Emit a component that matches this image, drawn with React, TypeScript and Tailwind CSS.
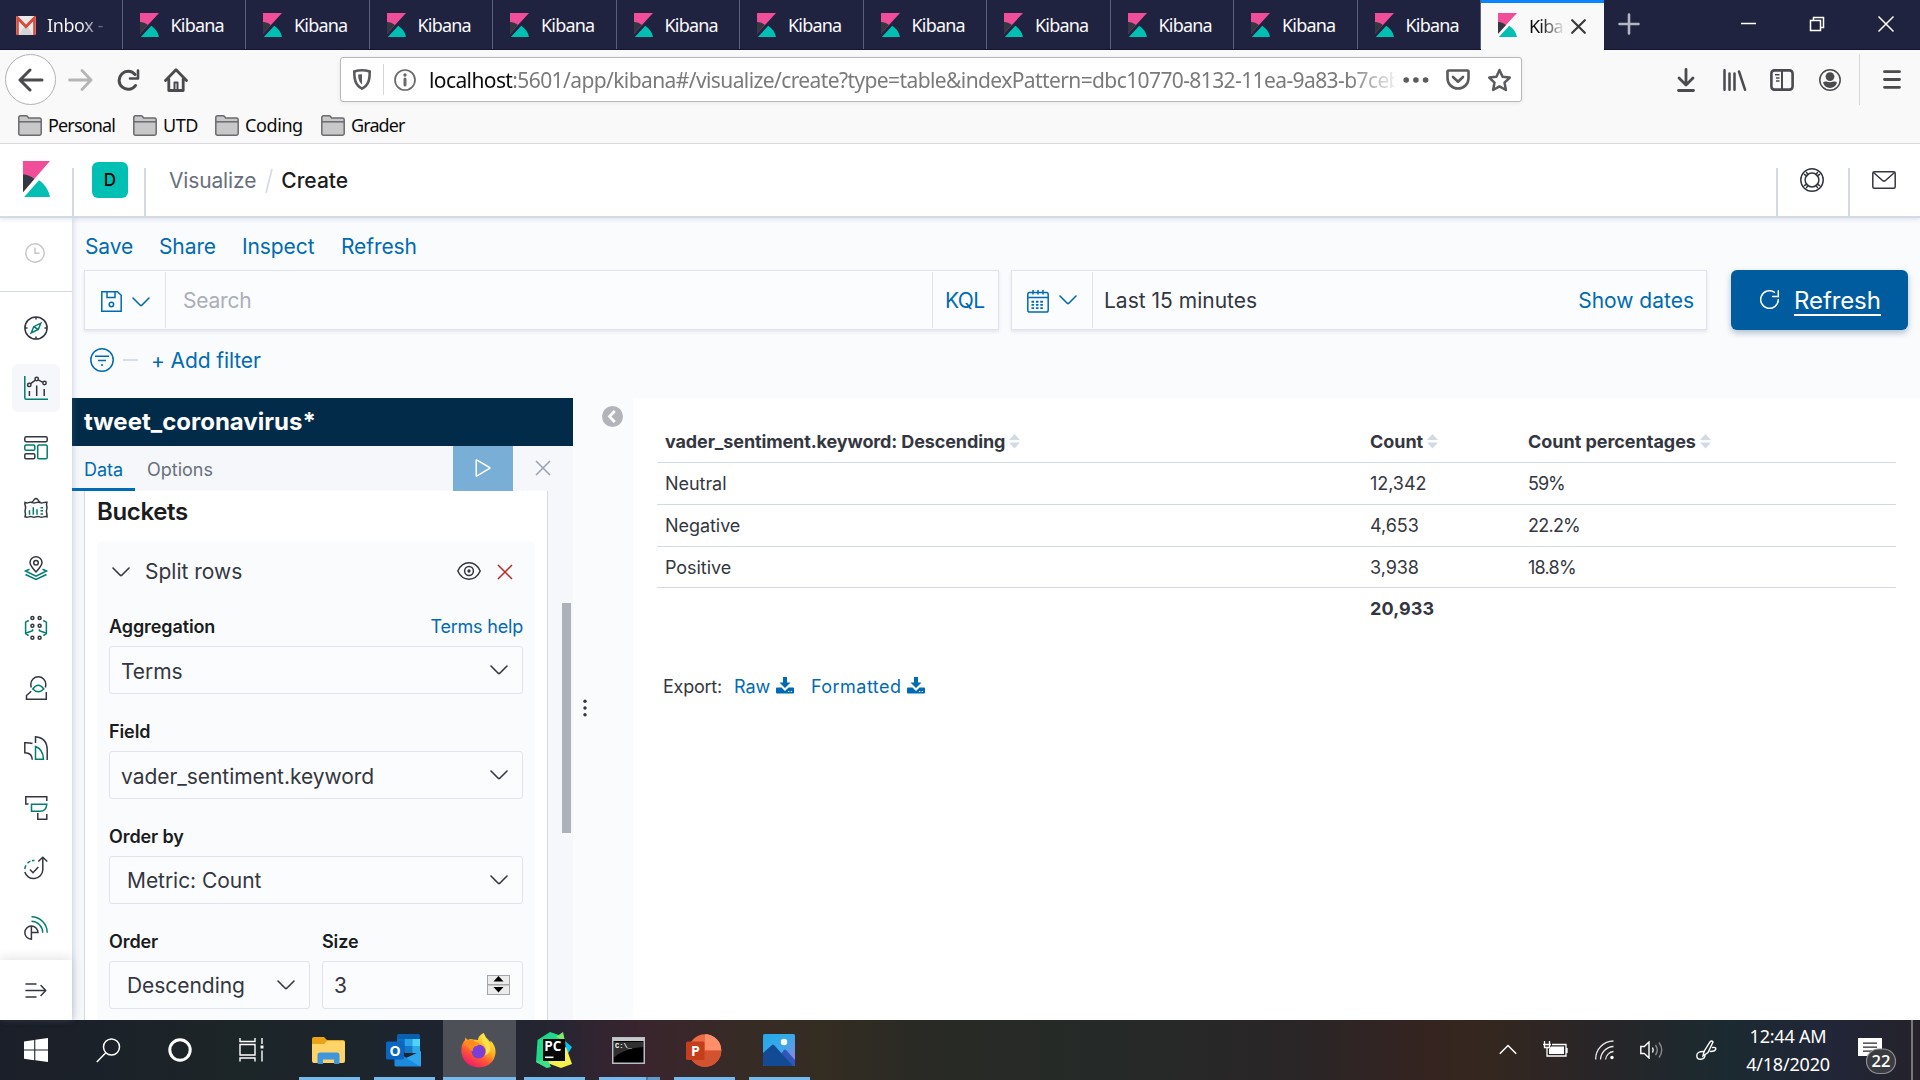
import React from "react";

type Kids = { children: React.ReactNode };

const DARK = "#343741";
const TEAL = "#017d73";
const BLUE = "#006bb4";

function KibanaLogo({ w, h, ink = DARK }: { w: number; h: number; ink?: string }) {
  return (
    <svg width={w} height={h} viewBox="0 0 27 36" preserveAspectRatio="none" className="shrink-0">
      <path d="M0 0v31L27 0z" fill="#f04e98" />
      <path d="M0 13.5v17.8L11.3 18C7.900 15.200 4 13.500 0 13.500z" fill={ink} />
      <path d="M16 19.200L1.200 36H27c-1.300-7-5.300-13-11-16.800z" fill="#00bfb3" />
    </svg>
  );
}

function Chevron({ color = DARK, className = "" }: { color?: string; className?: string }) {
  return (
    <svg width="18" height="10" viewBox="0 0 18 10" className={`shrink-0 ${className}`} fill="none" stroke={color} strokeWidth="1.6" strokeLinecap="round" strokeLinejoin="round">
      <path d="M1 1l7.200 7.200q.8.7 1.600 0L17 1" />
    </svg>
  );
}

function BrowserTab() {
  return (
    <div className="flex h-[49px] w-[123.5px] shrink-0 items-center border-r border-[#5d5e77] pl-[17px]">
      <KibanaLogo w={19} h={24} />
      <span className="ml-[12px] pt-[2px] text-[18px] tracking-[-0.8px] text-[#f9f9fa]">Kibana</span>
    </div>
  );
}

function TabStrip() {
  return (
    <div className="flex h-[50px] shrink-0 border-b border-[#14152c] bg-[#202340]">
      <div className="flex h-[49px] w-[122.500px] shrink-0 items-center border-r border-[#5d5e77] pt-[2px] pl-[16px]">
        <svg width="20" height="19" viewBox="0 0 20 16" preserveAspectRatio="none" className="shrink-0">
          <rect width="20" height="16" rx="1.500" fill="#e9e9e9" />
          <path d="M3 16L8 9h4l5 7z" fill="#d5d5d5" />
          <path d="M1.500 16V1.500L10 9l8.500-7.500V16" fill="none" stroke="#d54b3d" strokeWidth="2.600" />
        </svg>
        <span className="ml-[11px] bg-gradient-to-r from-[#f9f9fa] from-60% to-[#55576f] bg-clip-text text-[18px] tracking-[-0.4px] whitespace-pre text-transparent">Inbox -</span>
      </div>
      {Array.from({ length: 11 }, (_, i) => (
        <BrowserTab key={i} />
      ))}
      <div className="flex h-[50px] w-[123px] shrink-0 items-center border-t-[3px] border-[#0a84ff] bg-[#f9f9fa] pb-[3px] pl-[17px]">
        <KibanaLogo w={19} h={24} />
        <span className="ml-[12px] w-[34px] overflow-hidden bg-gradient-to-r from-[#0c0c0d] from-30% to-[#e4e4e4] bg-clip-text pt-[2px] text-[18px] tracking-[-0.8px] text-transparent">Kiba</span>
        <svg width="15" height="15" viewBox="0 0 15 15" className="mt-[3px] ml-[8px]" stroke="#3a3a3c" strokeWidth="2.200" strokeLinecap="round">
          <path d="M1.200 1.200l12.600 12.600M13.800 1.200L1.200 13.800" />
        </svg>
      </div>
      <svg width="22" height="22" viewBox="0 0 22 22" className="mt-[13px] ml-[14px]" stroke="#b4b5c2" strokeWidth="2.600" strokeLinecap="round">
        <path d="M11 1.500v19M1.500 11h19" />
      </svg>
      <svg width="154" height="18" viewBox="0 0 154 18" className="mt-[15px] ml-[101px]" stroke="#fff" strokeWidth="1.500" fill="none">
        <path d="M0 8.500h15" />
        <path d="M69.500 5.500h10v10h-10zM72.500 5V2.500h10v10h-2.500" />
        <path d="M137.500 1.500l15 15M152.500 1.500l-15 15" />
      </svg>
    </div>
  );
}

function Toolbar() {
  return (
    <div className="flex h-[59px] items-center">
      <div className="ml-[5px] flex size-[51px] items-center justify-center rounded-full border border-[#b1b1b3] bg-white">
        <svg width="26" height="24" viewBox="0 0 26 24" fill="none" stroke="#4a4a4f" strokeWidth="3" strokeLinecap="round" strokeLinejoin="round">
          <path d="M24 12H2.500M12 2L2 12l10 10" />
        </svg>
      </div>
      <svg width="25" height="22" viewBox="0 0 25 22" className="ml-[12px]" fill="none" stroke="#b5b5b6" strokeWidth="2.800" strokeLinecap="round" strokeLinejoin="round">
        <path d="M1.500 11h21M14 1.500l9 9.500-9 9.500" />
      </svg>
      <svg width="24" height="22" viewBox="0 0 24 22" className="ml-[23px]" fill="none" stroke="#4a4a4f" strokeWidth="3" strokeLinecap="round">
        <path d="M19 5.500A9 9 0 1 0 19.500 16.500" />
        <path d="M22 1.500v8h-8" strokeWidth="2.600" strokeLinejoin="round" />
      </svg>
      <svg width="24" height="24" viewBox="0 0 24 24" className="ml-[24px]" fill="none" stroke="#4a4a4f" strokeWidth="2.800" strokeLinecap="round" strokeLinejoin="round">
        <path d="M1.500 12.500L12 1.800l10.500 10.700M4.800 11v11.500h14.400V11" />
        <path d="M10.500 22v-7.500h3V22z" strokeWidth="2" />
      </svg>
      <div className="ml-[152px] flex h-[45px] w-[1182px] items-center rounded-[3px] border border-[#b8b8ba] bg-white shadow-[0_1px_4px_rgba(0,0,0,0.08)]">
        <svg width="18" height="21" viewBox="0 0 18 21" className="ml-[12px] shrink-0">
          <path d="M9 1.300c3 0 5.500.5 7.700 1.200 0 7.500-.7 13.500-7.700 17.200C2 16 1.300 10 1.300 2.500 3.500 1.800 6 1.300 9 1.300z" fill="none" stroke="#5b5b5f" strokeWidth="2.600" />
          <path d="M9 5.200v10.300C5.800 13 5.200 9.500 5.200 5.600z" fill="#5b5b5f" />
        </svg>
        <div className="ml-[12px] h-[31px] w-px bg-[#d7d7db]" />
        <svg width="22" height="22" viewBox="0 0 22 22" className="ml-[10px] shrink-0" fill="none" stroke="#6a6a6d">
          <circle cx="11" cy="11" r="10" strokeWidth="1.700" />
          <path d="M11 10v6" strokeWidth="3" strokeLinecap="round" />
          <circle cx="11" cy="6" r="1.700" fill="#6a6a6d" stroke="none" />
        </svg>
        <div className="ml-[13px] w-[965px] shrink-0 overflow-hidden pt-[2px] text-[21px] tracking-[-0.6px] whitespace-nowrap text-[#7a7a7c] [mask-image:linear-gradient(to_right,#000_920px,rgba(0,0,0,0.15)_965px)]">
          <span className="text-[#0c0c0d]">localhost</span>:5601/app/kibana#/visualize/create?type=table&amp;indexPattern=dbc10770-8132-11ea-9a83-b7ceb
        </div>
        <svg width="26" height="6" viewBox="0 0 26 6" className="ml-[9px] shrink-0" fill="#5b5b5f">
          <circle cx="3.200" cy="3" r="2.800" />
          <circle cx="12.900" cy="3" r="2.800" />
          <circle cx="22.600" cy="3" r="2.800" />
        </svg>
        <svg width="24" height="21" viewBox="0 0 24 21" className="ml-[17px] shrink-0" fill="none" stroke="#5b5b5f" strokeWidth="2.600" strokeLinecap="round" strokeLinejoin="round">
          <path d="M2.500 1.500h19q1 0 1 1V9c0 6-4.500 10.500-10.500 10.500S1.500 15 1.500 9V2.500q0-1 1-1z" />
          <path d="M7 8l5 4.700L17 8" />
        </svg>
        <svg width="25" height="24" viewBox="0 0 25 24" className="ml-[17px] shrink-0" fill="none" stroke="#5b5b5f" strokeWidth="2.500" strokeLinejoin="round">
          <path d="M12.500 2l3.100 6.700 7.200.9-5.300 5 1.400 7.400-6.400-3.600L6.100 22l1.400-7.400-5.300-5 7.200-.9z" />
        </svg>
      </div>
      <svg width="18" height="24" viewBox="0 0 18 24" className="ml-[155px]" fill="none" stroke="#4a4a4f" strokeWidth="2.800" strokeLinecap="round" strokeLinejoin="round">
        <path d="M9 1.500v15M2 10l7 7 7-7M1.500 22.500h15" />
      </svg>
      <svg width="24" height="22" viewBox="0 0 24 22" className="ml-[28px]" fill="none" stroke="#4a4a4f" strokeWidth="2.500" strokeLinecap="round">
        <path d="M1.500 1.300v19.400M6.500 4.500v16.200M11.500 4.500v16.200M16 2.500l6 18.200" />
      </svg>
      <svg width="24" height="22" viewBox="0 0 24 22" className="ml-[23px]" fill="none" stroke="#4a4a4f" strokeWidth="2.600">
        <rect x="1.400" y="1.400" width="21.200" height="19.200" rx="3" />
        <path d="M12 1v20" strokeWidth="2" />
        <path d="M5 5.800h4.500M6 9h3.500M6 12h3.500" strokeWidth="1.500" />
      </svg>
      <svg width="22" height="22" viewBox="0 0 22 22" className="ml-[25px]">
        <circle cx="11" cy="11" r="10.200" fill="none" stroke="#4a4a4f" strokeWidth="1.500" />
        <circle cx="11" cy="7.600" r="4.400" fill="#4a4a4f" />
        <path d="M4 13.500q1.500-1.500 3.500-1 3.500 1.600 7 0 2-.5 3.500 1-1.500 5-7 5.500-5.500-.5-7-5.500z" fill="#4a4a4f" />
      </svg>
      <div className="ml-[18px] h-[51px] w-px bg-[#d7d7db]" />
      <svg width="18" height="19" viewBox="0 0 18 19" className="ml-[23px]" stroke="#4a4a4f" strokeWidth="2.800" strokeLinecap="round">
        <path d="M1.500 1.700h15M1.500 9.500h15M1.500 17.300h15" />
      </svg>
    </div>
  );
}

function Bookmark({ label, className }: { label: string; className: string }) {
  return (
    <div className={`flex items-center text-[18px] ${className}`}>
      <svg width="24" height="21" viewBox="0 0 24 21" className="shrink-0" fill="#c8c8ca" stroke="#6b6b6e" strokeWidth="1.500" strokeLinejoin="round">
        <path d="M.8 18.500v-16q0-1.700 1.700-1.700h5.500q1 0 1.700.9l1 1.300h10.800q1.700 0 1.700 1.700v13.800q0 1.700-1.700 1.700h-19Q.8 20.200.8 18.500z" />
        <path d="M.8 6.800h22.400" />
      </svg>
      <span className="ml-[6px] text-[#0c0c0d]">{label}</span>
    </div>
  );
}

function Bookmarks() {
  return (
    <div className="flex h-[33px] items-center pl-[18px]">
      <Bookmark label="Personal" className="w-[115px] tracking-[-0.85px]" />
      <Bookmark label="UTD" className="w-[82px] tracking-[-0.4px]" />
      <Bookmark label="Coding" className="w-[106px] tracking-[-0.4px]" />
      <Bookmark label="Grader" className="w-[106px] tracking-[-0.9px]" />
    </div>
  );
}

function AppHeader() {
  return (
    <div className="relative z-10 flex h-[74px] shrink-0 border-b-2 border-[#d3dae6] bg-white shadow-[0_2px_4px_rgba(90,110,150,0.15)]">
      <div className="flex w-[72px] pt-[17px] pl-[23px]">
        <KibanaLogo w={27} h={36} />
      </div>
      <div className="mt-[24px] h-[48px] w-[2px] bg-[#d3dae6]" />
      <div className="mt-[18px] ml-[18px] flex size-[36px] items-center justify-center rounded-[6px] bg-[#00bfb3] pt-[2px] text-[17px] font-medium text-black">D</div>
      <div className="mt-[24px] ml-[16px] h-[48px] w-[2px] bg-[#d3dae6]" />
      <div className="flex h-[72px] flex-1 items-center pt-[2px] pl-[23px] text-[21px]">
        <span className="tracking-[-0.15px] text-[#69707d]">Visualize</span>
        <svg width="8" height="24" viewBox="0 0 8 24" className="mb-[1px] ml-[9px]" stroke="#d3dae6" strokeWidth="1.700">
          <path d="M7 0L1 24" />
        </svg>
        <span className="ml-[8px] font-medium text-[#1a1c21]">Create</span>
      </div>
      <div className="mt-[24px] h-[48px] w-[2px] bg-[#d3dae6]" />
      <svg width="24" height="24" viewBox="0 0 24 24" className="mt-[24px] ml-[22px]" fill="none" stroke={DARK} strokeWidth="1.500">
        <circle cx="12" cy="12" r="11.200" />
        <circle cx="12" cy="12" r="6.900" />
        <path d="M4 6.200l3.200 2.200M6.200 4l2.200 3.200M17.800 4l-2.200 3.200M20 6.200l-3.200 2.200M20 17.800l-3.200-2.200M17.800 20l-2.200-3.200M6.200 20l2.200-3.200M4 17.800l3.200-2.200" strokeWidth="1.400" />
      </svg>
      <div className="mt-[24px] ml-[24px] h-[48px] w-[2px] bg-[#d3dae6]" />
      <svg width="24" height="18" viewBox="0 0 24 18" className="mt-[27px] mr-[24px] ml-[22px]" fill="none" stroke={DARK} strokeWidth="1.500">
        <rect x=".8" y=".8" width="22.400" height="16.400" rx="1.500" />
        <path d="M1.500 1.500l9.300 8.200q1.200 1 2.400 0l9.300-8.200" />
      </svg>
    </div>
  );
}

const navIcons: React.ReactNode[] = [
  <>
    <circle cx="12" cy="12" r="11.100" />
    <path d="M12 1v2.500M12 20.500V23M1 12h2.500M20.500 12H23" />
    <path d="M16.800 7.200l-2.500 6.300-7.100 3.500 2.500-6.300zM14.300 13.500l-4.600-2.800" stroke={TEAL} />
  </>,
  <>
    <path d="M.8 0v21.700q0 1.500 1.500 1.500H24" stroke={TEAL} />
    <path d="M5.400 15v5M12.700 9.500V20M20.200 13v7M6.600 7.600l4.800-3.500M14.200 3.900l4.600 2.400" />
    <circle cx="5.300" cy="8.900" r="1.700" />
    <circle cx="12.700" cy="3" r="1.700" />
    <circle cx="20.500" cy="7" r="1.700" />
  </>,
  <>
    <rect x=".8" y=".8" width="22.400" height="5" rx="1.500" />
    <rect x=".8" y="9" width="10" height="5.200" rx="1.300" stroke={TEAL} />
    <rect x=".8" y="17.800" width="10" height="5" rx="1.300" />
    <rect x="13.700" y="9" width="9.500" height="13.800" rx="1.300" stroke={TEAL} />
  </>,
  <g transform="translate(0 .8)">
    <path d="M1 5.500q1.800 1 3.600.3 1.800-.7 3.600 0 1.900.6 3.800 0 1.900-.6 3.800 0 1.800.7 3.600 0 1.800-.7 3.600-.3-.8 1.800-.3 3.500.5 1.900 0 3.600-.5 1.900 0 3.600.4 1.800.3 3.800-1.800-.8-3.600.1-1.800.6-3.600 0-1.900-.7-3.800 0-1.900.7-3.800 0-1.800-.6-3.600 0-1.800.5-3.600-.1.700-2 .3-3.800-.5-1.700 0-3.600.5-1.700 0-3.600Q.6 7.300 1 5.500zM7.500 5.500q1.800-1 2.800-2.800Q12 .5 13.700 2.700q1 1.800 2.800 2.800" />
    <path d="M5.500 13.500V18M9.300 10.500V18M13 12.500V18M16.500 11h2.500M16.500 14h2.500M16.500 17.200h2.500" stroke={TEAL} />
  </g>,
  <>
    <path d="M12 16C8.800 12.500 6 9.800 6 6.600 6 3.400 8.600.8 12 .8s6 2.600 6 5.800c0 3.200-2.800 5.900-6 9.400z" />
    <circle cx="12" cy="6.700" r="2.300" />
    <path d="M5.500 13.200L1.500 15 12 20.200 22.500 15l-4-1.800M1.500 18.500L12 23.500l10.500-5" stroke={TEAL} />
  </>,
  <>
    <circle cx="8.400" cy="2.100" r="1.500" /><circle cx="15.600" cy="2.100" r="1.500" />
    <circle cx="8.400" cy="9.800" r="1.500" /><circle cx="15.600" cy="9.800" r="1.500" />
    <circle cx="8.400" cy="21.800" r="1.500" /><circle cx="15.600" cy="21.800" r="1.500" />
    <path d="M4.800 4.500L1.600 6.200v11.300l3 2.200M1.600 17.300l7-2.500v-1.500M19.200 4.500l3.200 1.700v11.300l-3 2.200M22.400 17.300l-7-2.500v-1.500" stroke={TEAL} />
  </>,
  <>
    <path d="M7.300 11.500Q6.800 10 6.800 8.300a7.500 7.500 0 0 1 15 0q0 1.700-.5 3.200M7.200 15.200l-4.700 4.300v3.700h19.800V16" />
    <path d="M8.800 13q5.500-7.500 11 0-5.500 5.500-11 0z" stroke={TEAL} />
  </>,
  <>
    <path d="M11.500 7V.8Q23.200 2 23.200 14v10" />
    <path d="M8.500 7.500Q5 6.600.8 6.800v10q7.500.2 7.500 7" />
    <path d="M11.500 10.500q7.500 2.500 8 12.700h-8z" stroke={TEAL} />
  </>,
  <>
    <path d="M4.500 8H1.800V.8h21V5M13.800 17v6.200h9V18" />
    <path d="M7.500 8.200h15.300q-.5 7-6.800 7H7.500z" stroke={TEAL} />
  </>,
  <>
    <path d="M18.800 1.500V14a9.200 9.200 0 0 1-18 2M14.300 5.500l4.500-4.300 4.500 4.300M6 13.500l3 3.200 5.300-5.700" />
    <path d="M.8 13q.2-2 1.200-3.600M3.500 7.300q1.300-1.500 3-2.200M8 4.700q1-.2 2.500-.1" stroke={TEAL} />
  </>,
  <>
    <path d="M7.400 23.200A6.600 6.600 0 1 1 14 16.600H7.400M7.400 10v13.900" />
    <path d="M7.500 5.300A11.300 11.300 0 0 1 18.700 16.700M7.500.8A15.800 15.800 0 0 1 23.200 16.700" stroke={TEAL} />
  </>,
];

function SideNav() {
  return (
    <nav className="relative z-[5] flex w-[72px] shrink-0 flex-col bg-white shadow-[1px_0_6px_rgba(90,110,150,0.28)]">
      <div className="flex h-[74px] justify-center border-b border-[#d3dae6] pt-[25px]">
        <svg width="20" height="20" viewBox="0 0 20 20" className="mr-[2px]" fill="none" stroke="#c5c7cb" strokeWidth="1.500">
          <circle cx="10" cy="10" r="9.200" />
          <path d="M10 4.500v5.700h4.500" />
        </svg>
      </div>
      <div className="mt-[12px] flex flex-1 flex-col items-center gap-[12px]">
        {navIcons.map((icon, i) => (
          <div key={i} className={i === 1 ? "flex size-[48px] items-center justify-center rounded-[6px] bg-[#f5f7fa]" : "flex size-[48px] items-center justify-center"}>
            <svg width="24" height="24" viewBox="0 0 24 24" fill="none" stroke={DARK} strokeWidth="1.500" overflow="visible">
              {icon}
            </svg>
          </div>
        ))}
      </div>
      <div className="flex h-[60px] items-center justify-center bg-white shadow-[0_-2px_10px_rgba(90,90,90,0.16)]">
        <svg width="22" height="15" viewBox="0 0 22 15" fill="none" stroke={DARK} strokeWidth="1.500" strokeLinecap="round" strokeLinejoin="round">
          <path d="M1 1h10M1 7.500h19.500M1 14h10M16 2.500l4.800 5-4.800 5" />
        </svg>
      </div>
    </nav>
  );
}

function MenuLink({ children, w }: Kids & { w: string }) {
  return <span className={`${w} shrink-0`}>{children}</span>;
}

function QueryBar() {
  return (
    <div className="flex h-[60px] pr-[12px] pl-[12px]">
      <div className="flex w-[915px] items-center border border-[#e0e3ed] bg-[#fbfcfd] shadow-[0_2px_3px_rgba(90,110,150,0.15)]">
        <svg width="21" height="21" viewBox="0 0 21 21" className="mt-[3px] ml-[16px] shrink-0" fill="none" stroke={BLUE} strokeWidth="1.500">
          <path d="M.8.8h15.700l3.700 3.500v15.900H.8zM6 1v5.500h8V1" />
          <circle cx="10.400" cy="13.500" r="2.200" />
        </svg>
        <Chevron color={BLUE} className="mt-[3px] ml-[10px]" />
        <div className="ml-[15px] h-[56px] w-px bg-[#dfe3ea]" />
        <span className="ml-[17px] flex-1 pt-[2px] tracking-[-0.2px] text-[#abafb8]">Search</span>
        <div className="h-[56px] w-px bg-[#dfe3ea]" />
        <span className="w-[65px] pt-[2px] pl-[12px] tracking-[-0.6px] text-[#006bb4]">KQL</span>
      </div>
      <div className="ml-[12px] flex w-[696px] items-center border border-[#e0e3ed] bg-[#fbfcfd] shadow-[0_2px_3px_rgba(90,110,150,0.15)]">
        <svg width="22" height="23" viewBox="0 0 22 23" className="mt-[2px] ml-[15px] shrink-0" fill="none" stroke={BLUE} strokeWidth="1.500">
          <rect x=".8" y="2.500" width="20.400" height="19.500" rx="1.800" />
          <path d="M1 7.500h20M6 0v4.500M11 0v4.500M16 0v4.500" />
          <path d="M4.500 11.700h13M4.500 14.900h13M4.500 18.100h13" strokeWidth="1.900" strokeDasharray="2.600 1.800" />
        </svg>
        <Chevron color={BLUE} className="ml-[10px]" />
        <div className="ml-[15px] h-[56px] w-px bg-[#dfe3ea]" />
        <span className="ml-[11px] flex-1 pt-[2px] text-[#343741]">Last 15 minutes</span>
        <span className="mr-[12px] pt-[2px] text-[#006bb4]">Show dates</span>
      </div>
      <div className="ml-[24px] flex flex-1 items-center rounded-[6px] bg-[#005c9e] text-[24px] text-white shadow-[0_3px_6px_rgba(40,80,120,0.35)]">
        <svg width="20" height="20" viewBox="0 0 20 20" className="ml-[29px] shrink-0" fill="none" stroke="#fff" strokeWidth="1.500" strokeLinecap="round">
          <path d="M14.500 2.300A8.800 8.800 0 1 0 18.300 9.500M18.300.8v5.700h-5.700" />
        </svg>
        <span className="mt-[1px] ml-[14px] border-b-2 border-white pt-[1px] leading-[27px] tracking-[-0.1px]">Refresh</span>
      </div>
    </div>
  );
}

function Select({ label, value, help, indent = false, className = "" }: { label: string; value: string; help?: string; indent?: boolean; className?: string }) {
  return (
    <div className={className}>
      <div className="flex h-[40px] items-center justify-between text-[18px]">
        <span className="font-semibold tracking-[-0.1px] text-[#1a1c21]">{label}</span>
        {help && <span className="tracking-[-0.2px] text-[#006bb4]">{help}</span>}
      </div>
      <div className={`flex h-[48px] items-center justify-between rounded-[3px] border border-[#e0e3ed] bg-[#fbfcfd] pr-[14px] text-[21px] text-[#343741] ${indent ? "pt-[2px] pl-[17px]" : "pt-[3px] pl-[11px]"}`}>
        <span className="tracking-[-0.05px]">{value}</span>
        <Chevron className="mb-[3px]" />
      </div>
    </div>
  );
}

function EditorPanel() {
  return (
    <div className="flex w-[501px] shrink-0 flex-col bg-[#f5f7fa]">
      <div className="flex h-[48px] shrink-0 items-center bg-[#012b49] pl-[12px] text-[24px] font-bold text-white">tweet_coronavirus*</div>
      <div className="flex h-[45px] shrink-0 text-[18px]">
        <div className="flex w-[63px] items-center border-b-[3px] border-[#006bb4] pt-[5px] pl-[12px] text-[#006bb4]">Data</div>
        <div className="flex flex-1 items-center pt-[2px] pl-[12px] text-[#69707d]">Options</div>
        <div className="flex w-[60px] items-center justify-center bg-[#79aed7]">
          <svg width="16" height="18" viewBox="0 0 16 18" className="mb-[2px]" fill="none" stroke="#fff" strokeWidth="1.500" strokeLinejoin="round">
            <path d="M1.200 1.500q0-.8.800-.4l12.600 7.400q.6.500 0 .9L2 16.900q-.8.400-.8-.4z" />
          </svg>
        </div>
        <div className="flex w-[60px] items-center justify-center">
          <svg width="16" height="16" viewBox="0 0 16 16" className="mb-[1px]" stroke="#98a2b3" strokeWidth="1.500">
            <path d="M1 1l14 14M15 1L1 15" />
          </svg>
        </div>
      </div>
      <div className="flex min-h-0 flex-1">
        <div className="ml-[12px] h-[560px] w-[464px] border-x border-[#d3dae6] bg-white px-[12px]">
          <div className="h-[50px] text-[24px] leading-[41px] font-semibold tracking-[-0.35px] text-[#1a1c21]">Buckets</div>
          <div className="h-[510px] rounded-[6px] bg-[#fafbfd] px-[12px]">
            <div className="flex h-[65px] items-center pb-[3px] text-[21px] text-[#343741]">
              <Chevron className="ml-[3px]" />
              <span className="ml-[15px] flex-1">Split rows</span>
              <svg width="24" height="18" viewBox="0 0 24 18" className="mb-[2px]" fill="none" stroke={DARK} strokeWidth="1.500">
                <path d="M.8 9Q4.500.8 12 .8T23.200 9Q19.500 17.200 12 17.200T.8 9z" />
                <circle cx="12" cy="9" r="4.400" />
                <circle cx="12" cy="9" r=".9" fill={DARK} />
              </svg>
              <svg width="16" height="16" viewBox="0 0 16 16" className="mr-[10px] mb-[1px] ml-[16px]" stroke="#bd271e" strokeWidth="1.500">
                <path d="M1 1l14 14M15 1L1 15" />
              </svg>
            </div>
            <Select label="Aggregation" value="Terms" help="Terms help" />
            <Select label="Field" value="vader_sentiment.keyword" className="mt-[17px]" />
            <Select label="Order by" value="Metric: Count" indent className="mt-[17px]" />
            <div className="mt-[17px] flex gap-[12px]">
              <Select label="Order" value="Descending" indent className="flex-1" />
              <div className="flex-1">
                <div className="flex h-[40px] items-center text-[18px] font-semibold tracking-[-0.1px] text-[#1a1c21]">Size</div>
                <div className="flex h-[48px] items-center justify-between rounded-[3px] border border-[#e0e3ed] bg-[#fbfcfd] pt-[2px] pr-[12px] pl-[11px] text-[21px] text-[#343741]">
                  <span>3</span>
                  <svg width="23" height="20" viewBox="0 0 23 20" className="mb-[2px]">
                    <rect x=".5" y=".5" width="22" height="9" fill="#ececec" stroke="#a5a5a5" />
                    <rect x=".5" y="10" width="22" height="9.500" fill="#ececec" stroke="#a5a5a5" />
                    <path d="M6.500 6.500L11.500 1l5 5.500zM6.500 12h10l-5 5.500z" fill="#000" />
                  </svg>
                </div>
              </div>
            </div>
          </div>
        </div>
        <div className="mt-[112px] ml-[14px] h-[230px] w-[9px] bg-[#adb2ba]" />
      </div>
    </div>
  );
}

function SortMark() {
  return (
    <svg width="11" height="15" viewBox="0 0 11 15" className="ml-[4px] shrink-0" fill="#d3dae6">
      <path d="M0 6L5.500 0 11 6zM0 8.500h11l-5.500 6z" />
    </svg>
  );
}

function DownloadMark() {
  return (
    <svg width="18" height="17" viewBox="0 0 18 17" className="mb-[2px] ml-[6px] shrink-0" fill={BLUE}>
      <path d="M7 0h4v5.500h3.500L9 11 3.500 5.500H7z" />
      <path d="M1 10.500h4.500L9 14l3.500-3.500H17q1 0 1 1V15.500q0 1-1 1H1q-1 0-1-1V11.500q0-1 1-1z" />
      <path d="M12 14h1.300v1H12zM14.700 14H16v1h-1.300z" fill="#fff" />
    </svg>
  );
}

function HeadCell({ children, w }: Kids & { w: string }) {
  return (
    <div className={`flex items-center font-bold ${w}`}>
      {children}
      <SortMark />
    </div>
  );
}

const rows: [string, string, string][] = [
  ["Neutral", "12,342", "59%"],
  ["Negative", "4,653", "22.2%"],
  ["Positive", "3,938", "18.8%"],
];

function ResultTable() {
  return (
    <div className="min-w-0 flex-1 bg-white pr-[24px] pl-[24px] text-[18px] text-[#343741]">
      <div className="flex h-[65px] items-center border-b border-[#d3dae6] pt-[22px] pl-[8px]">
        <HeadCell w="w-[705px] tracking-[-0.12px]">vader_sentiment.keyword: Descending</HeadCell>
        <HeadCell w="w-[158px] tracking-[-0.05px]">Count</HeadCell>
        <HeadCell w="tracking-[-0.03px]">Count percentages</HeadCell>
      </div>
      {rows.map(([name, count, pct], i) => (
        <div key={name} className={`flex items-center border-b border-[#d3dae6] pl-[8px] tracking-[-0.05px] ${i === 2 ? "h-[41px]" : "h-[42px]"}`}>
          <span className="w-[705px]">{name}</span>
          <span className="w-[158px]">{count}</span>
          <span className={i === 2 ? "tracking-[-0.75px]" : i === 1 ? "tracking-[-0.75px]" : "tracking-[-1px]"}>{pct}</span>
        </div>
      ))}
      <div className="flex h-[41px] items-center pl-[713px] font-bold tracking-[0.1px]">20,933</div>
      <div className="mt-[43px] flex h-[28px] items-center pl-[6px] tracking-[-0.1px]">
        <span className="w-[71px] tracking-[-0.25px]">Export:</span>
        <span className="flex w-[77px] items-center text-[#006bb4]">Raw<DownloadMark /></span>
        <span className="flex items-center tracking-[0.45px] text-[#006bb4]">Formatted<DownloadMark /></span>
      </div>
    </div>
  );
}

function Main() {
  return (
    <div className="flex min-w-0 flex-1 flex-col bg-[#fafbfd] text-[21px]">
      <div className="flex h-[52px] shrink-0 items-center pt-[6px] pl-[13px] tracking-[-0.1px] text-[#006bb4]">
        <MenuLink w="w-[74px]">Save</MenuLink>
        <MenuLink w="w-[83px]">Share</MenuLink>
        <MenuLink w="w-[99px]">Inspect</MenuLink>
        <MenuLink w="w-[90px]">Refresh</MenuLink>
      </div>
      <QueryBar />
      <div className="flex h-[68px] shrink-0 items-start pt-[18px] pl-[18px]">
        <svg width="24" height="24" viewBox="0 0 24 24" fill="none" stroke={BLUE} strokeWidth="1.500">
          <circle cx="12" cy="12" r="11.200" />
          <path d="M5 8.200h14M8 12.500h8M11 17h2" />
        </svg>
        <div className="mt-[11px] ml-[9px] h-[2px] w-[15px] bg-[#d9dfe8]" />
        <span className="ml-[13px] leading-[26px] tracking-[-0.1px] text-[#006bb4]">+ Add filter</span>
      </div>
      <div className="flex min-h-0 flex-1">
        <EditorPanel />
        <div className="flex w-[60px] shrink-0 flex-col">
          <svg width="21" height="21" viewBox="0 0 21 21" className="mt-[8px] ml-[29px]">
            <circle cx="10.500" cy="10.500" r="10.500" fill="#b3b4b9" />
            <path d="M12.800 5l-5.300 5.500 5.300 5.500" fill="none" stroke="#fff" strokeWidth="2.800" />
          </svg>
          <svg width="4" height="18" viewBox="0 0 4 18" className="mt-[272px] ml-[10px]" fill={DARK}>
            <circle cx="2" cy="2.200" r="1.700" />
            <circle cx="2" cy="9" r="1.700" />
            <circle cx="2" cy="15.800" r="1.700" />
          </svg>
        </div>
        <ResultTable />
      </div>
    </div>
  );
}

function Task({ w, line, children, active = false }: { w: string; line: string; children: React.ReactNode; active?: boolean }) {
  return (
    <div className={`flex h-[60px] shrink-0 flex-col items-center ${w} ${active ? "bg-[#4d5056]" : ""}`}>
      <div className="flex h-[57px] items-center justify-center pt-[3px] pr-[2px]">{children}</div>
      <div className={`h-[3px] ${line}`} />
    </div>
  );
}

function Taskbar() {
  return (
    <div className="flex h-[60px] shrink-0 items-center bg-[linear-gradient(90deg,#1b1f29_0px,#1c2528_240px,#1d2430_460px,#272532_560px,#3a242e_640px,#372b26_740px,#342d22_820px,#292a25_920px,#252a28_1100px,#2a2527_1300px,#352420_1430px,#35271f_1480px,#282528_1600px,#1b2a30_1720px,#212638_1830px,#25222a_1920px)] text-white">
      <svg width="24" height="24" viewBox="0 0 24 24" className="ml-[24px]" fill="#fff">
        <path d="M0 3.500L10.200 2v9.500H0zM11.300 1.800L24 0v11.500H11.300zM0 12.600h10.200v9.600L0 20.700zM11.300 12.600H24V24l-12.700-1.700z" />
      </svg>
      <svg width="25" height="25" viewBox="0 0 25 25" className="ml-[48px]" fill="none" stroke="#fff" strokeWidth="1.500">
        <circle cx="15.500" cy="9" r="8" />
        <path d="M9.800 14.800L.8 24" />
      </svg>
      <svg width="24" height="24" viewBox="0 0 24 24" className="ml-[47px]" fill="none" stroke="#fff">
        <circle cx="12" cy="12" r="10.200" strokeWidth="3" />
      </svg>
      <svg width="25" height="24" viewBox="0 0 25 24" className="ml-[47px]" fill="none" stroke="#fff" strokeWidth="1.400">
        <path d="M1 0v3.500h15V0M1 6.500h15v10.500H1zM1 23.500v-3.500h15v3.500M23 0v6M23 12.500v11" />
        <path d="M21.500 7.500h3v3h-3z" fill="#fff" stroke="none" />
      </svg>
      <div className="flex pl-[35px]">
        <Task w="w-[61px]" line="w-[61px] bg-[#76b9ed]">
          <svg width="33" height="27" viewBox="0 0 33 27">
            <path d="M0 2q0-2 2-2h10l3 3h16q2 0 2 2v5H0z" fill="#e8a317" />
            <path d="M0 7h12l3-3h16q2 0 2 2v18q0 2-2 2H2q-2 0-2-2z" fill="#fdd36a" />
            <path d="M5.500 26v-8q0-2.500 2.500-2.500h17q2.500 0 2.500 2.500v8q0 1-1 1h-4.500v-4.500H11V27H6.500q-1 0-1-1z" fill="#3f96dc" />
          </svg>
        </Task>
        <Task w="ml-[14px] w-[61px]" line="w-[61px] bg-[#76b9ed]">
          <svg width="36" height="33" viewBox="0 0 36 33">
            <path d="M11 1.500Q11 0 12.500 0h20Q34 0 34 1.500V18H11z" fill="#0a5fae" />
            <path d="M11 5h7.700v7H11z" fill="#0f6fc2" /><path d="M18.700 5h7.600v7h-7.600z" fill="#29a3e6" /><path d="M26.300 5H34v7h-7.700z" fill="#50d2fb" />
            <path d="M18.700 12h7.600v7h-7.600z" fill="#1478c9" /><path d="M26.300 12H34v7h-7.700z" fill="#29a9ea" />
            <path d="M8.500 17L35 32q-.8.500-1.500.5H10q-1.500 0-1.500-1.500z" fill="#1c8ade" />
            <path d="M35 17v14q0 1-.8 1.400L20 24z" fill="#2ea5ec" />
            <rect y="7.500" width="18" height="18" rx="1.500" fill="#0b65c2" />
            <text x="9" y="21.800" textAnchor="middle" fontFamily="Open Sans" fontWeight="700" fontSize="14" fill="#fff">O</text>
          </svg>
        </Task>
        <Task w="ml-[8px] w-[73px]" line="w-[73px] bg-[#76b9ed]" active>
          <svg width="35" height="35" viewBox="0 0 35 35">
            <defs>
              <linearGradient id="fx" x1="0.8" y1="0.05" x2="0.25" y2="1">
                <stop offset="0" stopColor="#fff04a" />
                <stop offset=".4" stopColor="#ffac1f" />
                <stop offset=".65" stopColor="#ff5634" />
                <stop offset="1" stopColor="#ee1472" />
              </linearGradient>
            </defs>
            <path d="M22.500 0q1.200 3.500 5 7 1 1 2 2.800V7.500Q35 13 34.500 20 33 33.500 17.500 34.500 3 33.500.5 20-.5 12 4 7l.3-2.500Q6 6 7 7q2-1.500 5-.5L17 7q0-4 5.500-7z" fill="url(#fx)" />
            <circle cx="17.500" cy="18.500" r="7" fill="#7a3fd6" />
            <path d="M3 10q4-4 9-3 2 2.500 6.500 3.200-1 3-5 3.300-2 2-1.500 4.500-4-1-4.500-4z" fill="#ff8a1e" />
            <path d="M22.500 0q-3.500 8 1 12 3 5 .5 10.500 6-2.500 5.500-8.500z" fill="#ffe14a" />
          </svg>
        </Task>
        <Task w="ml-[8px] w-[61px]" line="w-[61px] bg-[#76b9ed]">
          <svg width="36" height="36" viewBox="0 0 36 36">
            <path d="M1.500 8L14 0l12 4-2 14L11 36 0 30z" fill="#21d789" />
            <path d="M20 5l7-5 2 9z" fill="#7fe96b" />
            <path d="M29 9l7 6-5 8z" fill="#07c3f2" />
            <path d="M30 15l6 17-11 4-11-4-6-3z" fill="#f5f14c" />
            <path d="M0 30l11-4 4 9-4 1z" fill="#3fe08a" />
            <rect x="7" y="7" width="22" height="22" fill="#060606" />
            <text x="8.300" y="19" fontFamily="Open Sans" fontWeight="700" fontSize="13.500" fill="#fff">PC</text>
            <path d="M9 24.500h8.500v1.600H9z" fill="#fff" />
          </svg>
        </Task>
        <Task w="ml-[14px] w-[61px]" line="w-[61px] bg-[linear-gradient(90deg,#76b9ed_47px,#4b7ba3_47px,#4b7ba3_49px,#6299c8_49px)]">
          <svg width="33" height="27" viewBox="0 0 33 27">
            <rect x=".5" y=".5" width="32" height="26" fill="#000" stroke="#b9bec2" />
            <path d="M1 1h31v3H1z" fill="#c3c8cb" />
            <path d="M1.500 5h30v5Q12 11 1.500 21z" fill="#303030" />
            <path d="M1 4v22h31V4" fill="none" stroke="#b9bec2" />
            <text x="3" y="10.500" fontFamily="Liberation Mono" fontWeight="700" fontSize="7" fill="#fff">C:\_</text>
          </svg>
        </Task>
        <Task w="ml-[14px] w-[61px]" line="w-[61px] bg-[#76b9ed]">
          <svg width="36" height="33" viewBox="0 0 36 33">
            <circle cx="19" cy="16.500" r="16.300" fill="#ed6c47" />
            <path d="M19 .2a16.300 16.300 0 0 1 16.300 16.300H19z" fill="#ff8f6b" />
            <path d="M19 16.500h16.300a16.300 16.300 0 0 1-31 7z" fill="#d35230" />
            <rect y="7.500" width="18.500" height="18.500" rx="1.500" fill="#c43e1c" />
            <text x="9.300" y="21.800" textAnchor="middle" fontFamily="Open Sans" fontWeight="700" fontSize="14" fill="#fff">P</text>
          </svg>
        </Task>
        <Task w="ml-[14px] w-[61px]" line="w-[61px] bg-[#76b9ed]">
          <svg width="32" height="32" viewBox="0 0 32 32">
            <defs>
              <linearGradient id="ph" x1="0" y1="0" x2="1" y2="1">
                <stop offset="0" stopColor="#24a8e8" />
                <stop offset=".5" stopColor="#3aa8ea" />
                <stop offset="1" stopColor="#a07be0" />
              </linearGradient>
            </defs>
            <rect width="32" height="32" rx="1.500" fill="url(#ph)" />
            <path d="M13 27l8-11q1-1 2 0l9 10v4.500q0 1.500-1.500 1.500H18z" fill="#2f56b8" />
            <path d="M0 19l9-8q1-.8 2 0l19 21H1.500Q0 32 0 30.500z" fill="#124b94" />
            <circle cx="21" cy="8" r="3.200" fill="#fff" />
          </svg>
        </Task>
      </div>
      <svg width="18" height="11" viewBox="0 0 18 11" className="mb-[2px] ml-[689px]" fill="none" stroke="#fff" strokeWidth="1.500">
        <path d="M.8 9.800L9 1.500l8.200 8.300" />
      </svg>
      <svg width="25" height="18" viewBox="0 0 25 18" className="mb-[2px] ml-[26px]" fill="none" stroke="#fff" strokeWidth="1.300">
        <path d="M1.500 1v6.500h5V1M0 4.500h8M4 7.500V16h19V4.500H9M24 8v5" />
        <path d="M8 6.500h13v7.500H6V9z" fill="#fff" stroke="none" />
      </svg>
      <svg width="20" height="20" viewBox="0 0 20 20" className="ml-[27px]" fill="none" stroke="#e8e8e8" strokeWidth="1.300">
        <path d="M.7 19.500A18 18 0 0 1 18.500 1M5.500 19.500A13.500 13.500 0 0 1 18.500 6.500M10.500 19.500A9 9 0 0 1 18.500 11.500" />
        <circle cx="17" cy="17.500" r="1.700" fill="#fff" stroke="none" />
      </svg>
      <svg width="24" height="18" viewBox="0 0 24 18" className="ml-[25px]" fill="none" stroke="#fff" strokeWidth="1.400">
        <path d="M.8 5.500h3.500L9 1v16l-4.700-4.500H.8z" />
        <path d="M12.500 6.500q1.500 2.500 0 5" />
        <path d="M15.500 4q3.500 5 0 10M19 1.500q5.500 7.500 0 15" stroke="#8a8a8c" />
      </svg>
      <svg width="21" height="21" viewBox="0 0 21 21" className="ml-[32px]" fill="none" stroke="#fff" strokeWidth="1.400" strokeLinecap="round">
        <path d="M7 16l1-4.500L14 2q1.500-2 3 0L12 12.500 7 16zM16.500 7.500q3.500-.5 3.300 1.500-.5 2.500-5.500 2.500M8.500 11.500Q1 11 .8 15.500q0 4 4 3.800Q9 19 9 15" />
      </svg>
      <div className="ml-[23px] flex w-[96px] flex-col items-center text-[18px] leading-[28px] tracking-[-0.2px]">
        <span>12:44 AM</span>
        <span>4/18/2020</span>
      </div>
      <svg width="40" height="40" viewBox="0 0 40 40" className="mt-[12px] ml-[22px]">
        <path d="M0 2h24v18h-9v4l-4-4H0z" fill="#fff" />
        <path d="M5 7.200h14M5 11.200h14M5 15.200h9" stroke="#25262f" strokeWidth="1.300" />
        <rect x="8.500" y="13" width="29" height="24.500" rx="12.200" fill="#3b3b42" stroke="#8f9095" strokeWidth="1.200" />
        <text x="23" y="31" textAnchor="middle" fontFamily="Open Sans" fontWeight="600" fontSize="16.500" fill="#fff">22</text>
      </svg>
      <div className="ml-[13px] h-[60px] w-[2px] bg-[#77777b]" />
    </div>
  );
}

export default function App() {
  return (
    <div className="flex h-[1080px] w-[1920px] flex-col overflow-hidden bg-white font-['Noto_Sans',sans-serif]">
      <TabStrip />
      <div className="h-[94px] shrink-0 border-b border-[#dcdcdd] bg-[#f9f9fa]">
        <Toolbar />
        <Bookmarks />
      </div>
      <div className="flex min-h-0 flex-1 flex-col font-['Inter',sans-serif]">
        <AppHeader />
        <div className="flex min-h-0 flex-1">
          <SideNav />
          <Main />
        </div>
      </div>
      <Taskbar />
    </div>
  );
}
